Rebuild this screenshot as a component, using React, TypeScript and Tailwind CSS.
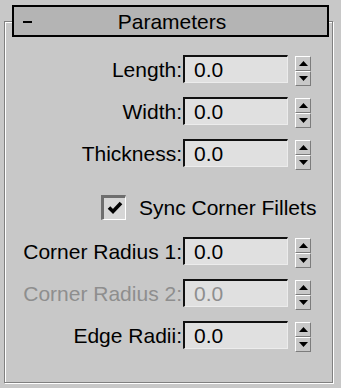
import React from "react";

const Spinner: React.FC = () => (
  <div className="flex flex-col w-[16px] ml-[7px] mt-[1px]">
    <div className="h-[15px] flex items-center justify-center bg-[#c8c8c8] border-t border-l border-t-white border-l-white border-b border-r border-b-[#7c7c7c] border-r-[#7c7c7c]">
      <svg width="9" height="5" viewBox="0 0 9 5">
        <polygon points="4.5,0 9,5 0,5" fill="#000" />
      </svg>
    </div>
    <div className="h-[15px] flex items-center justify-center bg-[#c8c8c8] border-t border-l border-t-white border-l-white border-b border-r border-b-[#7c7c7c] border-r-[#7c7c7c]">
      <svg width="9" height="5" viewBox="0 0 9 5">
        <polygon points="0,0 9,0 4.5,5" fill="#000" />
      </svg>
    </div>
  </div>
);

type RowProps = { label: string; disabled?: boolean; className?: string };

const Row: React.FC<RowProps> = ({ label, disabled, className }) => (
  <div className={`flex items-start h-[29px] ${className ?? ""}`}>
    <div
      className={`w-[178px] h-[28px] flex items-center justify-end pr-[1px] whitespace-nowrap ${
        disabled ? "text-[#8e8e8e]" : "text-black"
      }`}
    >
      {label}
    </div>
    <div
      className={`w-[105px] h-[28px] flex items-center pl-[9px] bg-[#e0e0e0] border-t-2 border-l-2 border-t-[#111] border-l-[#111] border-b border-r border-b-[#ececec] border-r-[#ececec] ${
        disabled ? "text-[#8e8e8e]" : "text-black"
      }`}
    >
      0.0
    </div>
    <Spinner />
  </div>
);

export default function App() {
  return (
    <div className="w-[341px] h-[388px] bg-[#c8c8c8] pt-[5px] font-['Liberation_Sans',Arial,sans-serif] text-[21px] leading-none text-black">
      <div className="relative z-10 ml-[12px] w-[317px] h-[32px] border-2 border-black bg-[#b4b4b4] flex items-center">
        <span className="w-[9px] h-[2px] bg-black ml-[9px] mt-[2px]" />
        <span className="flex-1 text-center pr-[15px]">Parameters</span>
      </div>
      <div className="-mt-[16px] ml-[4px] w-[329px] h-[362px] border border-[#808080] shadow-[inset_1px_1px_0_#fff,1px_1px_0_#fff] pt-[33px] flex flex-col">
        <Row label="Length:" />
        <Row label="Width:" className="mt-[13px]" />
        <Row label="Thickness:" className="mt-[13px]" />
        <div className="flex items-center h-[26px] mt-[26px] pl-[96px]">
          <div className="w-[25px] h-[25px] flex items-center justify-center bg-[#d6d6d6] border-t-[3px] border-l-[3px] border-t-[#6e6e6e] border-l-[#6e6e6e] border-b border-r border-b-white border-r-white">
            <svg width="16" height="14" viewBox="0 0 16 14">
              <polyline points="2,6.5 6,10.5 14,2" fill="none" stroke="#000" strokeWidth="3.6" />
            </svg>
          </div>
          <span className="ml-[13px] whitespace-nowrap">Sync Corner Fillets</span>
        </div>
        <Row label="Corner Radius 1:" className="mt-[17px]" />
        <Row label="Corner Radius 2:" disabled className="mt-[13px]" />
        <Row label="Edge Radii:" className="mt-[13px]" />
      </div>
    </div>
  );
}
